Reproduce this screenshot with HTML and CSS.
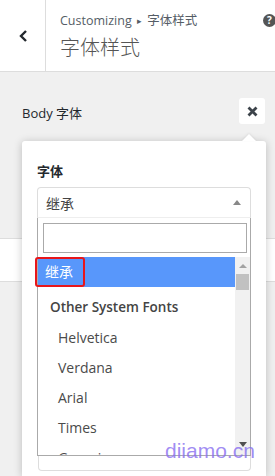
FILE: index.html
```html
<!DOCTYPE html>
<html lang="zh">
<head>
  <meta charset="UTF-8">
  <meta name="viewport" content="width=device-width, initial-scale=1.0">
  <title>字体样式</title>
  <link rel="stylesheet" href="styles.css">
</head>
<body>
  <div class="screen">
    <header class="top">
      <button class="back" aria-label="返回">
        <svg width="10" height="14" viewBox="0 0 10 14"><polyline points="7,2 2,7 7,12" fill="none" stroke="#23282d" stroke-width="2.4"/></svg>
      </button>
      <div class="title">
        <span class="crumb">Customizing <span class="sep">&#9656;</span> 字体样式</span>
        <h1>字体样式</h1>
      </div>
      <span class="help">?</span>
    </header>

    <div class="panel">
      <div class="control-row">
        <span class="control-name">Body 字体</span>
        <button class="close" aria-label="关闭">
          <svg width="11" height="11" viewBox="0 0 11 11"><path d="M1.5 1.5 L9.5 9.5 M9.5 1.5 L1.5 9.5" stroke="#3c434a" stroke-width="2.8"/></svg>
        </button>
      </div>
      <div class="band"></div>
    </div>

    <div class="popup">
      <div class="field-label">字体</div>
      <div class="select">
        <span>继承</span>
        <span class="caret"></span>
      </div>
      <div class="dropdown">
        <div class="search"><input type="text"></div>
        <div class="results">
          <ul class="options">
            <li class="opt active">继承</li>
            <li class="group">Other System Fonts</li>
            <li class="opt sub">Helvetica</li>
            <li class="opt sub">Verdana</li>
            <li class="opt sub">Arial</li>
            <li class="opt sub">Times</li>
            <li class="opt sub">Georgia</li>
          </ul>
          <div class="scrollbar">
            <span class="arrow up"></span>
            <span class="thumb"></span>
            <span class="fill"></span>
            <span class="arrow down"></span>
          </div>
        </div>
      </div>
      <div class="below"></div>
      <span class="mark"></span>
    </div>

    <span class="watermark">diiamo.cn</span>
  </div>
</body>
</html>
```

FILE: styles.css
```css
body {
  margin: 0;
  font-family: "Open Sans", "Noto Sans CJK SC", sans-serif;
}
.screen {
  position: relative;
  width: 275px;
  height: 476px;
  overflow: hidden;
  background-color: #f0f0f0;
}
.top {
  display: flex;
  height: 71px;
  background-color: #fff;
  border-bottom: 1px solid #ddd;
}
.back {
  width: 46px;
  padding: 0 0 0 2px;
  border: none;
  border-right: 1px solid #ddd;
  background: #fff;
  display: flex;
  align-items: center;
  justify-content: center;
}
.title {
  flex: 1;
  padding: 12px 0 0 14px;
  display: flex;
  flex-direction: column;
}
.crumb {
  font-size: 12.5px;
  line-height: 18px;
  color: #555d66;
}
.sep {
  font-size: 9px;
  vertical-align: 1px;
  margin: 0 2px;
}
.title h1 {
  margin: 6px 0 0;
  font-size: 20px;
  line-height: 24px;
  font-weight: 300;
  color: #555;
}
.help {
  width: 13px;
  height: 13px;
  margin: 14px -1px 0 0;
  border-radius: 50%;
  background-color: #555;
  color: #fff;
  font-size: 10px;
  font-weight: 700;
  line-height: 13px;
  text-align: center;
}
.control-row {
  display: flex;
  justify-content: space-between;
  padding: 26px 10px 0 22px;
}
.control-name {
  padding-top: 6px;
  font-size: 13px;
  line-height: 18px;
  color: #23282d;
}
.close {
  width: 26px;
  height: 26px;
  padding: 0;
  border: none;
  border-radius: 3px;
  background-color: #fff;
  display: flex;
  align-items: center;
  justify-content: center;
}
.band {
  margin-top: 114px;
  height: 42px;
  background-color: #fff;
  border-top: 1px solid #ddd;
  border-bottom: 1px solid #ddd;
}
.popup {
  position: absolute;
  top: 141px;
  left: 22px;
  bottom: 0;
  width: 244px;
  box-sizing: border-box;
  padding: 22px 15px 0 15px;
  background-color: #fff;
  border-radius: 3px 3px 0 0;
  box-shadow: 0 1px 8px rgba(0,0,0,0.22);
}
.popup::before {
  content: "";
  position: absolute;
  top: -7px;
  right: 10px;
  border: 7px solid transparent;
  border-top: none;
  border-bottom-color: #fff;
  filter: drop-shadow(0 -1px 1px rgba(0,0,0,0.08));
}
.field-label {
  font-size: 13px;
  line-height: 17px;
  font-weight: 700;
  color: #23282d;
  margin-bottom: 7px;
}
.select {
  height: 31px;
  box-sizing: border-box;
  padding: 0 9px 0 8px;
  border: 1px solid #ddd;
  border-bottom-color: #eee;
  border-radius: 4px 4px 0 0;
  display: flex;
  align-items: center;
  justify-content: space-between;
  font-size: 14px;
  color: #444;
}
.caret {
  border: 4px solid transparent;
  border-top: none;
  border-bottom: 5px solid #888;
}
.dropdown {
  height: 238px;
  box-sizing: border-box;
  border: 1px solid #aaa;
  border-top: none;
  display: flex;
  flex-direction: column;
  background-color: #fff;
  position: relative;
  z-index: 1;
}
.search {
  padding: 5px 3px 4px 5px;
}
.search input {
  display: block;
  width: 100%;
  height: 30px;
  box-sizing: border-box;
  margin: 0;
  border: 1px solid #aaa;
}
.results {
  flex: 1;
  display: flex;
  min-height: 0;
}
.options {
  flex: 1;
  margin: 0;
  padding: 0;
  list-style: none;
  overflow: hidden;
  font-size: 14px;
  line-height: 20px;
  color: #4a4a4a;
}
.opt {
  padding: 5px 7px;
}
.opt.sub {
  padding-left: 20px;
}
.active {
  background-color: #5897fb;
  color: #fff;
}
.group {
  padding: 10px 12px 6px;
  font-weight: 600;
  font-size: 13.5px;
  color: #444;
}
.scrollbar {
  width: 15px;
  background-color: #f1f1f1;
  display: flex;
  flex-direction: column;
  align-items: center;
}
.arrow {
  height: 17px;
  width: 15px;
  display: flex;
  align-items: center;
  justify-content: center;
}
.arrow::after {
  content: "";
  border: 4px solid transparent;
}
.arrow.up::after {
  border-top: none;
  border-bottom: 4px solid #a3a3a3;
}
.arrow.down::after {
  border-bottom: none;
  border-top: 5px solid #505050;
  margin-top: -4px;
}
.thumb {
  width: 13px;
  height: 16px;
  background-color: #c1c1c1;
}
.fill {
  flex: 1;
}
.below {
  height: 14px;
  margin-left: 1px;
  border: 1px solid #ddd;
  border-top: none;
  border-radius: 0 0 4px 4px;
}
.mark {
  position: absolute;
  top: 116px;
  left: 13px;
  width: 50px;
  height: 30px;
  box-sizing: border-box;
  border: 2px solid #e8161b;
  border-radius: 3px;
  z-index: 2;
}
.watermark {
  position: absolute;
  z-index: 3;
  left: 165px;
  top: 440px;
  font-family: "Liberation Sans", sans-serif;
  font-size: 21px;
  line-height: 21px;
  color: rgba(135,110,240,0.8);
}
```
